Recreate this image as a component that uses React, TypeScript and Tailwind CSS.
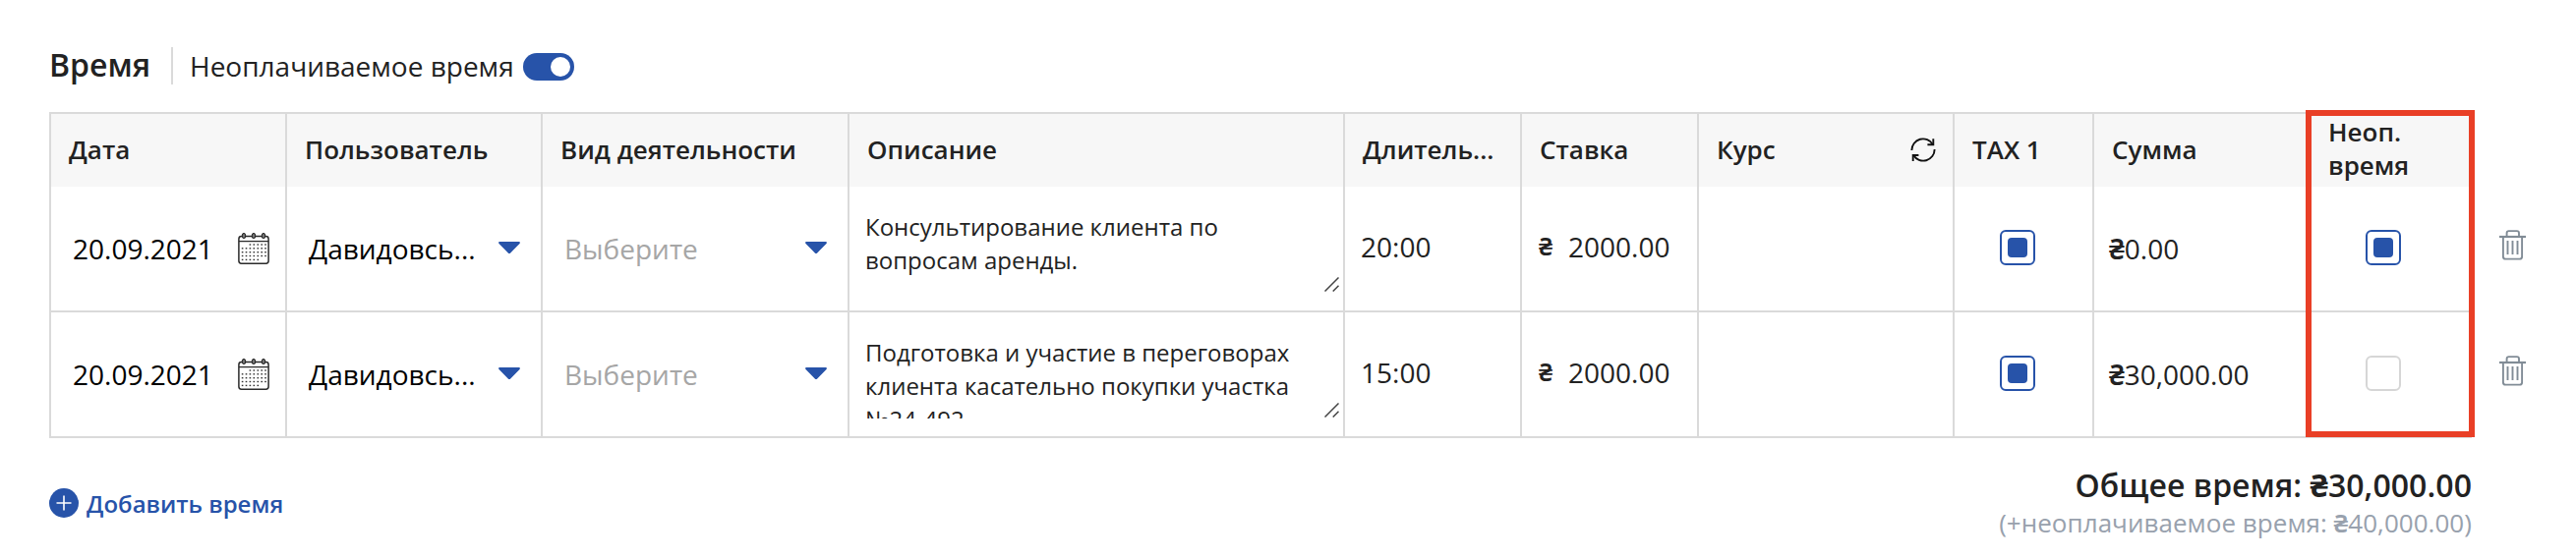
import React from "react";

const COLS =
  "grid grid-cols-[240px_260px_312px_504px_180px_180px_260px_142px_218px_166px]";
const CELL = "flex items-center border-r-2 border-[#dadada]";

function Hryvnia({ className = "" }: { className?: string }) {
  return <span className={`font-['Noto_Sans',sans-serif] ${className}`}>₴</span>;
}

const DOTS = [
  { y: 12, xs: [12.4, 16.3, 20.3, 24.2, 28] },
  { y: 15.8, xs: [4.6, 8.5, 12.4, 16.3, 20.3, 24.2, 28] },
  { y: 19.7, xs: [4.6, 8.5, 12.4, 16.3, 20.3, 24.2, 28] },
  { y: 23.5, xs: [4.6, 8.5, 12.4, 16.3, 20.3, 24.2, 28] },
  { y: 27.4, xs: [4.6, 8.5, 12.4, 16.3, 20.3] },
];

function CalendarIcon() {
  return (
    <svg width="32" height="32" viewBox="0 0 32 32" fill="none" stroke="#2b2b2b">
      <rect x="0.9" y="3.6" width="30.2" height="27.6" rx="2.6" strokeWidth="1.5" />
      <path d="M1 8.6H31" strokeWidth="1.3" />
      {[6, 16, 26].map((x) => (
        <ellipse key={x} cx={x} cy="3" rx="1.7" ry="2.5" fill="#777" strokeWidth="1.1" />
      ))}
      {DOTS.map((row) =>
        row.xs.map((x) => (
          <rect key={`${row.y}-${x}`} x={x - 0.8} y={row.y - 0.7} width="1.6" height="1.4" fill="#333" stroke="none" />
        )),
      )}
    </svg>
  );
}

function Caret() {
  return (
    <svg width="22" height="12" viewBox="0 0 22 12" fill="#2753a9">
      <path d="M1.3 0H20.7C21.8 0 22.3 1.2 21.5 2L12.2 11.4C11.5 12.1 10.5 12.1 9.8 11.4L0.5 2C-0.3 1.2 0.2 0 1.3 0Z" />
    </svg>
  );
}

function RefreshIcon() {
  return (
    <svg width="26" height="25" viewBox="0 0 26 25" fill="none" stroke="#111" strokeWidth="1.9">
      <path d="M1.4 13A11.5 11.5 0 0 1 22.8 7" />
      <path d="M23.3 1.2V7.3H17.4" />
      <path d="M24.6 12A11.5 11.5 0 0 1 3.2 18" />
      <path d="M2.7 24V18H8.4" />
    </svg>
  );
}

function TrashIcon() {
  return (
    <svg width="27" height="31" viewBox="0 0 27 31" fill="none" stroke="#818c96" strokeWidth="1.9">
      <path d="M0 7H27" strokeWidth="2.2" />
      <path d="M7.6 6.5V3.2C7.6 1.9 8.4 1.1 9.7 1.1H17.9C19.2 1.1 20 1.9 20 3.2V6.5" />
      <path d="M3.9 7.5V27.2C3.9 28.7 4.8 29.6 6.3 29.6H20.7C22.2 29.6 23.1 28.7 23.1 27.2V7.5" />
      <path d="M8.5 11V25M13.5 11V25M18.5 11V25" />
    </svg>
  );
}

function Checkbox({ checked }: { checked: boolean }) {
  return (
    <span
      className={`flex size-9 items-center justify-center rounded-[6px] border-2 bg-white ${
        checked ? "border-[#2753a9]" : "border-[#d6d6d6]"
      }`}
    >
      {checked && <span className="size-5 rounded-[4px] bg-[#2753a9]" />}
    </span>
  );
}

type Entry = {
  description: string[];
  duration: string;
  total: string;
  unbilled: boolean;
};

const ENTRIES: Entry[] = [
  {
    description: ["Консультирование клиента по", "вопросам аренды."],
    duration: "20:00",
    total: "0.00",
    unbilled: true,
  },
  {
    description: ["Подготовка и участие в переговорах", "клиента касательно покупки участка", "№24-492"],
    duration: "15:00",
    total: "30,000.00",
    unbilled: false,
  },
];

function HeaderRow() {
  const head = `${CELL} pl-[18px] pb-0.5`;
  return (
    <div className={`${COLS} h-[74px] bg-[#f7f7f7] text-[26px] font-semibold leading-[34px]`}>
      <div className={head}>Дата</div>
      <div className={head}>Пользователь</div>
      <div className={head}>Вид деятельности</div>
      <div className={head}>Описание</div>
      <div className={head}>Длитель...</div>
      <div className={head}>Ставка</div>
      <div className={`${head} justify-between pr-[17px]`}>
        Курс
        <RefreshIcon />
      </div>
      <div className={head}>TAX 1</div>
      <div className={head}>Сумма</div>
      <div className={`${CELL} pb-1 pl-5`}>
        <span>
          Неоп.
          <br />
          время
        </span>
      </div>
    </div>
  );
}

function EntryRow({ entry }: { entry: Entry }) {
  return (
    <div className={`${COLS} h-32 border-b-2 border-[#dadada] text-[28px]`}>
      <div className={`${CELL} justify-between pr-4 pl-[22px] text-black`}>
        20.09.2021
        <CalendarIcon />
      </div>
      <div className={`${CELL} justify-between pr-[21px] pl-[22px] text-black`}>
        Давидовсь...
        <span className="pb-[3px]">
          <Caret />
        </span>
      </div>
      <div className={`${CELL} justify-between pr-[21px] pl-[22px] text-[#a6a6a6]`}>
        Выберите
        <span className="pb-[3px]">
          <Caret />
        </span>
      </div>
      <div className="relative border-r-2 border-[#dadada] pt-6 pl-4 text-2xl leading-[34px]">
        <div className="h-[84px] overflow-hidden">
          {entry.description.map((line) => (
            <div key={line}>{line}</div>
          ))}
        </div>
        <svg
          className="absolute right-1 bottom-[19px]"
          width="15"
          height="15"
          viewBox="0 0 15 15"
          stroke="#444"
          strokeWidth="1.5"
        >
          <path d="M0.5 14.5L14.5 0.5M8.7 14.5L14.5 8.7" />
        </svg>
      </div>
      <div className={`${CELL} pb-1 pl-4`}>{entry.duration}</div>
      <div className={`${CELL} pb-1 pl-[17px]`}>
        <Hryvnia className="w-[30px] text-[25px] font-semibold" />
        2000.00
      </div>
      <div className={CELL} />
      <div className={`${CELL} pb-0.5 pl-[46px]`}>
        <Checkbox checked />
      </div>
      <div className={`${CELL} pl-[15px]`}>
        <Hryvnia className="font-semibold" />
        {entry.total}
      </div>
      <div className={`${CELL} pb-0.5 pl-[58px]`}>
        <Checkbox checked={entry.unbilled} />
      </div>
    </div>
  );
}

export default function App() {
  return (
    <div className="h-[568px] w-[2620px] bg-white pt-12 pl-[50px] font-['Open_Sans',sans-serif] whitespace-nowrap text-[#222222]">
      <div className="flex h-[38px] items-center">
        <h1 className="w-[124px] pb-[3px] text-[32px] leading-[35px] font-semibold">Время</h1>
        <span className="h-full w-0.5 bg-[#dadada]" />
        <span className="ml-[17px] w-[339px] text-[28px] leading-[38px]">Неоплачиваемое время</span>
        <span className="mt-0.5 flex h-7 w-[52px] items-center justify-end rounded-full bg-[#2753a9] pr-1">
          <span className="size-5 rounded-full bg-white" />
        </span>
      </div>

      <div className="mt-7 flex">
        <div className="relative w-[2464px] border-t-2 border-l-2 border-[#dadada]">
          <HeaderRow />
          {ENTRIES.map((entry) => (
            <EntryRow key={entry.duration} entry={entry} />
          ))}
          <div className="absolute -top-1 left-[2293px] h-[333px] w-[172px] border-[6px] border-[#e93f26]" />
        </div>
        <div className="flex flex-col pt-[76px] pl-7">
          {ENTRIES.map((entry) => (
            <div key={entry.duration} className="flex h-32 items-center pb-[9px]">
              <TrashIcon />
            </div>
          ))}
        </div>
      </div>

      <div className="flex w-[2464px] items-start justify-between pt-7">
        <div className="flex items-center pt-[22px] text-2xl leading-[30px] font-semibold text-[#2753a9]">
          <svg width="30" height="30" viewBox="0 0 30 30">
            <circle cx="15" cy="15" r="15" fill="#2753a9" />
            <path d="M15 7.5V22.5M7.5 15H22.5" stroke="#fff" strokeWidth="1.6" />
          </svg>
          <span className="pt-0.5 pl-2">Добавить время</span>
        </div>
        <div className="pt-px text-right">
          <div className="text-[32px] leading-[38px] font-semibold tracking-[0.06px]">
            Общее время: <Hryvnia className="font-bold" />
            30,000.00
          </div>
          <div className="text-[26px] leading-[38px] tracking-[0.04px] text-[#98a1ad]">
            (+неоплачиваемое время: <Hryvnia className="font-semibold" />
            40,000.00)
          </div>
        </div>
      </div>
    </div>
  );
}
